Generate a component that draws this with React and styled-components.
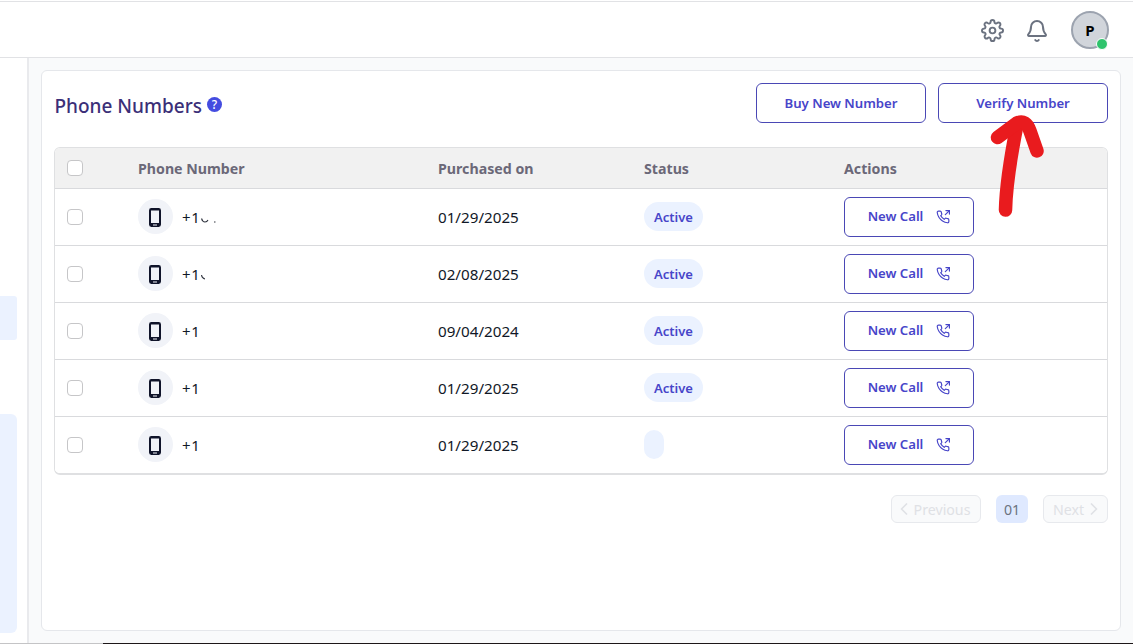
import React from "react";
import styled, { createGlobalStyle } from "styled-components";
import { Bell } from "lucide-react";
import { FiSettings, FiPhoneOutgoing, FiChevronLeft, FiChevronRight } from "react-icons/fi";

const GlobalStyle = createGlobalStyle`
  *, *::before, *::after { box-sizing: border-box; }
  body {
    margin: 0;
    background: #fff;
    color: #111827;
    font-family: "Noto Sans", "Open Sans", sans-serif;
    overflow: hidden;
  }
`;

const Page = styled.div`
  position: relative;
  display: flex;
  flex-direction: column;
  width: 1133px;
  height: 644px;
  overflow: hidden;
`;

const TopBar = styled.header`
  display: flex;
  align-items: center;
  justify-content: flex-end;
  height: 57px;
  margin-top: 1px;
  padding: 3px 24px 0 0;
  gap: 21px;
  border-top: 1px solid #e1e2e5;
  border-bottom: 1px solid #e1e2e5;
  color: #6b7280;

  svg { display: block; }
  svg:first-child { margin: -1px 0.5px 0 0; }
`;

const Avatar = styled.div`
  position: relative;
  display: flex;
  align-items: center;
  justify-content: center;
  width: 38px;
  height: 38px;
  margin: -2px 0 0 1px;
  border: 2px solid #9ca3af;
  border-radius: 50%;
  background: #d1d5db;
  color: #000;
  font-size: 15px;
  font-weight: 700;
  line-height: 20px;
`;

const OnlineDot = styled.span`
  position: absolute;
  right: -1px;
  bottom: -3px;
  width: 12px;
  height: 12px;
  border: 1px solid #fff;
  border-radius: 50%;
  background: #2fc36c;
`;

const Body = styled.div`
  display: flex;
  flex: 1;
  min-height: 0;
`;

const Sidebar = styled.aside`
  display: flex;
  flex-direction: column;
  gap: 74px;
  width: 29px;
  padding-top: 238px;
  border-right: 2px solid #e9eaed;
  background: #fff;
`;

const SideBlock = styled.div`
  width: 17px;
  height: ${(p) => p.$height}px;
  border-radius: 0 ${(p) => p.$radius}px ${(p) => p.$radius}px 0;
  background: #ebf2ff;
`;

const Main = styled.main`
  flex: 1;
  padding: 12px;
  background: #f9fafb;
`;

const Card = styled.section`
  width: 1080px;
  height: 561px;
  padding: 12px 12px 0;
  border: 1px solid #e5e7eb;
  border-radius: 6px;
  background: #fff;
`;

const CardHeader = styled.div`
  display: flex;
  align-items: center;
  justify-content: space-between;
  height: 40px;
  margin-bottom: 24px;
`;

const Title = styled.h1`
  display: flex;
  align-items: center;
  gap: 5px;
  margin: 5px 0 0 0.5px;
  color: #3b2f78;
  font-size: 19px;
  font-weight: 500;
  line-height: 26px;
`;

const Help = styled.span`
  display: inline-flex;
  align-items: center;
  justify-content: center;
  width: 15px;
  height: 15px;
  margin-top: -2px;
  border-radius: 50%;
  background: #444ce0;
  color: #fff;
  font-size: 12px;
  font-weight: 500;
  line-height: 15px;
`;

const ButtonGroup = styled.div`
  display: flex;
  gap: 12px;
`;

const OutlineButton = styled.button`
  display: inline-flex;
  align-items: center;
  justify-content: center;
  gap: 13px;
  width: ${(p) => p.$width}px;
  height: 40px;
  padding: 0 0 ${(p) => (p.$compact ? 2 : 1)}px;
  border: 1px solid #4a48b5;
  border-radius: 6px;
  background: #fff;
  color: #4745c9;
  font: 600 13.2px "Noto Sans", sans-serif;
  letter-spacing: -0.03px;

  svg { margin: 1px 0 0; }
`;

const Table = styled.div`
  border: 1px solid #dfe0e2;
  border-bottom-width: 2px;
  border-radius: 6px;
  overflow: hidden;
`;

const Row = styled.div`
  display: grid;
  grid-template-columns: 71px 300px 206px 200px 1fr;
  align-items: center;
  height: ${(p) => (p.$head ? 41 : 57)}px;
  padding-left: 12px;
  border-bottom: 1px solid #d9dadd;
  background: ${(p) => (p.$head ? "#f1f1f1" : "#fff")};

  &:last-child { height: 56px; border-bottom: 0; }
`;

const HeadCell = styled.div`
  color: #6b6878;
  font-size: 14.2px;
  font-weight: 700;
`;

const Checkbox = styled.span`
  display: block;
  width: 16px;
  height: 16px;
  border: 1px solid #c6c6c8;
  border-radius: 4px;
  background: #fff;
`;

const NumberCell = styled.div`
  display: flex;
  align-items: center;
  gap: 9px;
  font-size: 15px;
`;

const PhoneBadge = styled.span`
  display: flex;
  align-items: center;
  justify-content: center;
  width: 35px;
  height: 35px;
  padding: 1px 1px 0 0;
  margin-top: -1px;
  border-radius: 50%;
  background: #f1f3f8;
`;

const NumberText = styled.span`
  display: flex;
  align-items: center;
  letter-spacing: 0.7px;
  line-height: 20px;
`;

const DateCell = styled.div`
  font-size: 15.2px;
  line-height: 20px;
`;

const StatusPill = styled.span`
  display: flex;
  align-items: center;
  width: fit-content;
  height: 29px;
  padding: 0 10px;
  margin-top: -1px;
  border-radius: 15px;
  background: #ebf2ff;
  color: #4745c9;
  font-size: 13px;
  font-weight: 600;
`;

const Pagination = styled.nav`
  display: flex;
  justify-content: flex-end;
  gap: 15px;
  margin-top: 20px;
`;

const PageButton = styled.button`
  display: flex;
  align-items: center;
  justify-content: center;
  width: ${(p) => p.$width}px;
  height: 28px;
  padding: 0;
  border: ${(p) => (p.$current ? "0" : "1px solid #e7e9ed")};
  border-radius: 6px;
  background: ${(p) => (p.$current ? "#dfe9ff" : "#f9fafb")};
  color: ${(p) => (p.$current ? "#6b7280" : "#dfe1e5")};
  font: 400 14.2px "Noto Sans", sans-serif;

  svg { flex: none; }
  svg:first-child { margin: 0 -1px 0 -7px; }
  svg:last-child { margin: 0 -6px 0 0; }
`;

const PageLabel = styled.span`
  margin: 0 ${(p) => p.$after || 0}px 0 ${(p) => p.$before || 0}px;
`;

const BottomEdge = styled.footer`
  display: flex;
  height: 1px;
  background: #c4c4c6;
  padding-left: 103px;

  &::after {
    content: "";
    flex: 1;
    background: #1d1718;
  }
`;

const ArrowOverlay = styled.svg`
  position: absolute;
  top: 108px;
  left: 982px;
  pointer-events: none;
`;

const PhoneGlyph = () => (
  <svg width="12" height="19" viewBox="0 0 12 19">
    <path
      fill="#10142a"
      fillRule="evenodd"
      d="M2.4 0h7.2A2.4 2.4 0 0 1 12 2.4v14.2A2.4 2.4 0 0 1 9.6 19H2.4A2.4 2.4 0 0 1 0 16.6V2.4A2.4 2.4 0 0 1 2.4 0zM2 2.5v12.5h8V2.5zM4 16.5v.9h4v-.9z"
    />
  </svg>
);

const marks = {
  long: "M0.5 9.5Q1.5 13 4 13Q6 13 7 11M13 13h1.500",
  short: "M0.500 9Q1 12.500 4 13",
};

const Remainder = ({ kind }) => (
  <svg width="22" height="16" viewBox="0 0 22 16" fill="none" stroke="#30343f" strokeWidth="1.1">
    <path d={marks[kind]} />
  </svg>
);

const rows = [
  { date: "01/29/2025", status: "Active", mark: "long" },
  { date: "02/08/2025", status: "Active", mark: "short" },
  { date: "09/04/2024", status: "Active" },
  { date: "01/29/2025", status: "Active" },
  { date: "01/29/2025", status: "" },
];

export default function App() {
  return (
    <Page>
      <GlobalStyle />
      <TopBar>
        <FiSettings size={23} />
        <Bell size={24} />
        <Avatar>
          P
          <OnlineDot />
        </Avatar>
      </TopBar>
      <Body>
        <Sidebar>
          <SideBlock $height={44} $radius={3} />
          <SideBlock $height={219} $radius={6} />
        </Sidebar>
        <Main>
          <Card>
            <CardHeader>
              <Title>
                Phone Numbers <Help>?</Help>
              </Title>
              <ButtonGroup>
                <OutlineButton $width={170}>Buy New Number</OutlineButton>
                <OutlineButton $width={170}>Verify Number</OutlineButton>
              </ButtonGroup>
            </CardHeader>
            <Table>
              <Row $head>
                <Checkbox />
                <HeadCell>Phone Number</HeadCell>
                <HeadCell>Purchased on</HeadCell>
                <HeadCell>Status</HeadCell>
                <HeadCell>Actions</HeadCell>
              </Row>
              {rows.map((row, i) => (
                <Row key={i}>
                  <Checkbox />
                  <NumberCell>
                    <PhoneBadge>
                      <PhoneGlyph />
                    </PhoneBadge>
                    <NumberText>
                      +1
                      {row.mark && <Remainder kind={row.mark} />}
                    </NumberText>
                  </NumberCell>
                  <DateCell>{row.date}</DateCell>
                  <StatusPill>{row.status}</StatusPill>
                  <OutlineButton $width={130} $compact>
                    New Call
                    <FiPhoneOutgoing size={14} />
                  </OutlineButton>
                </Row>
              ))}
            </Table>
            <Pagination>
              <PageButton $width={90}>
                <FiChevronLeft size={20} />
                <PageLabel $before={1} $after={1}>Previous</PageLabel>
              </PageButton>
              <PageButton $width={32} $current>
                01
              </PageButton>
              <PageButton $width={65}>
                <PageLabel>Next</PageLabel>
                <FiChevronRight size={20} />
              </PageButton>
            </Pagination>
          </Card>
        </Main>
      </Body>
      <BottomEdge />
      <ArrowOverlay
        width="70"
        height="114"
        viewBox="982 108 70 114"
        fill="none"
        stroke="#e91b1e"
        strokeWidth="13.5"
        strokeLinecap="round"
        strokeLinejoin="round"
      >
        <path d="M1005.5 210C1006 188 1010 160 1017 125" />
        <path d="M997.5 137.5L1017 123Q1026 119 1030 131L1037 151" />
      </ArrowOverlay>
    </Page>
  );
}
